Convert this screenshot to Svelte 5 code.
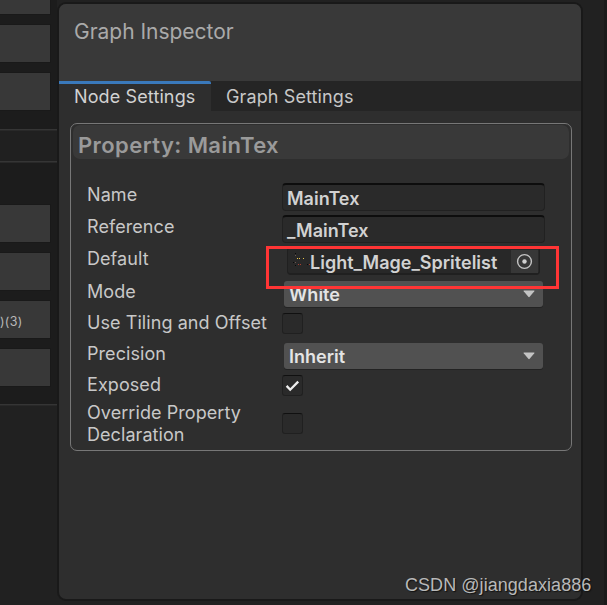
<script>
  const blocks = [
    { gap: 0, height: 14 },
    { gap: 11, height: 37 },
    { gap: 11, height: 37 },
    { gap: 19, rule: true },
    { gap: 30, rule: true },
    { gap: 42, height: 37 },
    { gap: 11, height: 37 },
    { gap: 11, height: 37, text: ')(3)' },
    { gap: 11, height: 37 },
    { gap: 18, rule: true }
  ];
  const rows = [
    { label: 'Name', kind: 'text', value: 'MainTex', h: 32 },
    { label: 'Reference', kind: 'text', value: '_MainTex', h: 32 },
    { label: 'Default', kind: 'object', value: 'Light_Mage_Spritelist', h: 32 },
    { label: 'Mode', kind: 'select', value: 'White', h: 33 },
    { label: 'Use Tiling and Offset', kind: 'check', value: false, h: 30 },
    { label: 'Precision', kind: 'select', value: 'Inherit', h: 31 },
    { label: 'Exposed', kind: 'check', value: true, h: 29 },
    { label: 'Override Property Declaration', kind: 'check', value: false, h: 44 }
  ];
</script>

<main class="screen">
  <aside class="graph">
    {#each blocks as b}
      {#if b.rule}
        <div class="rule" style="margin-top:{b.gap}px"></div>
      {:else}
        <div class="block" style="margin-top:{b.gap}px;height:{b.height}px">{b.text ?? ''}</div>
      {/if}
    {/each}
  </aside>

  <section class="panel">
    <header><h1>Graph Inspector</h1></header>
    <nav>
      <div class="tab active">Node Settings</div>
      <div class="tab">Graph Settings</div>
    </nav>
    <div class="property">
      <h2>Property: MainTex</h2>
      <div class="rows">
        {#each rows as r, i}
          <div class="row r{i}" style="height:{r.h}px">
            <div class="label">{r.label}</div>
            <div class="control">
              {#if r.kind === 'text'}
                <div class="field">{r.value}</div>
              {:else if r.kind === 'object'}
                <div class="object">
                  <svg class="thumb" width="18" height="14" viewBox="0 0 18 14" shape-rendering="crispEdges">
                    <path fill="#080808" d="M3 0h1v1H3zM1 9h1v1H1zM3 12h1v1H3zM15 11h1v1H15z" />
                    <path fill="#6a5750" d="M3 2h1v1H3zM3 9h1v1H3z" />
                    <path fill="#e8c44c" d="M5 5h1v1H5zM7 5h1v1H7zM11 5h1v1H11z" />
                    <path fill="#a83f30" d="M6 11h1v1H6zM8 11h1v1H8zM17 11h1v1H17z" />
                  </svg>
                  <span>{r.value}</span>
                  <div class="picker">
                    <svg width="17" height="17" viewBox="0 0 17 17">
                      <circle cx="8.5" cy="8.5" r="6.9" fill="none" stroke="#c4c4c4" stroke-width="1.4" />
                      <circle cx="8.5" cy="8.5" r="2.2" fill="#d0d0d0" />
                    </svg>
                  </div>
                </div>
              {:else if r.kind === 'select'}
                <div class="select">
                  <span>{r.value}</span>
                  <svg width="12" height="8" viewBox="0 0 12 8"><path d="M1 .5h10q.8 0 .3.8L6.7 6.8q-.7.7-1.4 0L.7 1.3Q.2.5 1 .5z" fill="#c4c4c4" /></svg>
                </div>
              {:else}
                <div class="check">
                  {#if r.value}
                    <svg width="15" height="12" viewBox="0 0 15 12"><path d="M1.6 5.9 5.2 9.7 13.2 1.6" fill="none" stroke="#eee" stroke-width="2.3" /></svg>
                  {/if}
                </div>
              {/if}
            </div>
          </div>
        {/each}
      </div>
    </div>
  </section>

  <div class="highlight"></div>
  <div class="watermark">CSDN @jiangdaxia886</div>
</main>

<style>
  .screen {
    position: relative;
    display: flex;
    width: 607px;
    height: 605px;
    overflow: hidden;
    background: #212121;
    box-shadow: inset -3px 0 #1b1b1b;
    font-family: Inter, 'Noto Sans', sans-serif;
    color: #c8c8c8;
    box-sizing: border-box;
  }
  .graph {
    width: 57px;
    flex: none;
    display: flex;
    flex-direction: column;
    background: linear-gradient(#1c1c1c 0 129px, #202020 129px 161px, #1c1c1c 161px 405px, #212121 405px);
  }
  .block {
    width: 50px;
    flex: none;
    background: #383838;
    box-shadow: 0 0 0 1px #191919;
    font-size: 12.5px;
    line-height: 41px;
    letter-spacing: .3px;
    color: #b8b8b8;
  }
  .rule { height: 1px; flex: none; background: #353535; box-shadow: 0 1px #292929; margin-bottom: 1px; }
  .panel {
    width: 522px;
    height: 595px;
    margin: 4px 0 0 2px;
    flex: none;
    background: #2e2e2e;
    border-radius: 7px;
    box-shadow: 0 0 0 2px #191919;
    overflow: hidden;
  }
  header { height: 77px; background: #393939; }
  h1 {
    margin: 0;
    padding: 15px 0 0 15px;
    font-weight: 400;
    font-size: 21px;
    line-height: 26px;
    letter-spacing: -.02px;
    color: #aaa;
  }
  nav { display: flex; height: 30px; background: #252525; }
  .tab { font-size: 18px; line-height: 31px; padding-left: 15px; white-space: nowrap; color: #c8c8c8; letter-spacing: .12px; }
  .active {
    width: 152px;
    box-sizing: border-box;
    background: linear-gradient(#3a79bb 0 3px, #2e2e2e 3px);
    border-radius: 0 2px 0 0;
    color: #d2d2d2;
  }
  .property {
    width: 502px;
    height: 328px;
    box-sizing: border-box;
    margin: 12px 0 0 11px;
    padding: 1px 2px;
    border: 1px solid #777;
    border-radius: 7px;
  }
  h2 {
    margin: 0;
    height: 34px;
    padding-left: 5px;
    background: #393939;
    border-radius: 7px;
    font-size: 22px;
    font-weight: 600;
    line-height: 40px;
    letter-spacing: .42px;
    color: #9a9a9a;
  }
  .rows { padding: 24px 0 0 14px; }
  .row { display: flex; }
  .label {
    width: 195px;
    flex: none;
    box-sizing: border-box;
    padding-top: 1px;
    font-size: 18px;
    line-height: 22px;
    letter-spacing: .07px;
  }
  .control { flex: none; width: 263px; font-weight: 600; font-size: 18px; }
  .field {
    height: 28px;
    box-sizing: border-box;
    border: 1px solid #212121;
    border-top: 2px solid #0d0d0d;
    border-radius: 4px;
    background: #2a2a2a;
    padding-left: 4px;
    line-height: 27px;
    color: #d2d2d2;
  }
  .object {
    display: flex;
    width: 253px;
    height: 28px;
    box-sizing: border-box;
    margin-left: 5px;
    border: 1px solid #202020;
    border-bottom-width: 2px;
    border-radius: 4px;
    background: #282828;
    padding: 2px 1px 0 4px;
    line-height: 26px;
    color: #d2d2d2;
  }
  .thumb { flex: none; margin-top: 3px; }
  .picker {
    display: flex;
    align-items: center;
    justify-content: center;
    width: 27px;
    height: 23px;
    margin-left: auto;
    background: #373737;
  }
  .select {
    display: flex;
    justify-content: space-between;
    height: 26px;
    margin: 0 2px 0 2px;
    padding: 0 8px 0 5px;
    box-sizing: border-box;
    border-radius: 3px;
    background: #515151;
    box-shadow: 0 1px #232323;
    line-height: 27px;
    color: #e4e4e4;
  }
  .select svg { margin-top: 9px; }
  .check {
    display: flex;
    align-items: center;
    justify-content: center;
    width: 21px;
    height: 21px;
    box-sizing: border-box;
    border: 1px solid #202020;
    border-top-color: #101010;
    border-radius: 3px;
    background: #2a2a2a;
  }
  .r3 .control { padding-top: 2px; }
  .r3 .label { padding-top: 2px; }
  .r4 .label, .r7 .label { padding-top: 0; }
  .r4 .control { padding-top: 1px; }
  .r5 .control { padding-top: 1px; }
  .r6 .control { padding-top: 2px; }
  .r7 .control { padding-top: 11px; }
  .highlight {
    position: absolute;
    left: 266px;
    top: 246px;
    width: 293px;
    height: 43px;
    box-sizing: border-box;
    border: 3px solid #ff3535;
  }
  .watermark {
    position: absolute;
    left: 405px;
    top: 574px;
    font: 18px/22px 'Liberation Sans', Arial, sans-serif;
    letter-spacing: .05px;
    white-space: nowrap;
    color: #b9b9b9;
    text-shadow: 1px 1px 1px #111;
  }
</style>
